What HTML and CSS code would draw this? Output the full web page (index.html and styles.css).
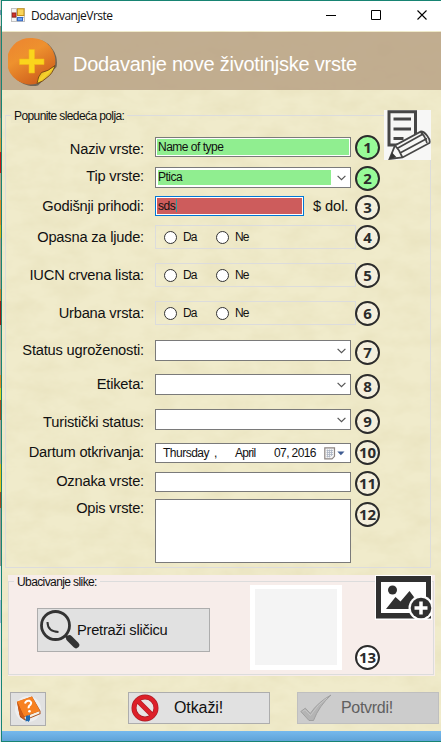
FILE: index.html
```html
<!DOCTYPE html>
<html lang="sr">
<head>
<meta charset="utf-8">
<title>DodavanjeVrste</title>
<link rel="stylesheet" href="styles.css">
</head>
<body>
<div class="window">
  <svg class="paper" width="439" height="710" aria-hidden="true">
    <filter id="grain" x="0" y="0" width="100%" height="100%">
      <feTurbulence type="fractalNoise" baseFrequency="0.035 0.06" numOctaves="4" seed="8"/>
      <feColorMatrix values="0 0 0 0 0.74  0 0 0 0 0.68  0 0 0 0 0.42  0.6 0 0 0 -0.2"/>
    </filter>
    <rect width="439" height="710" filter="url(#grain)"/>
  </svg>
  <header class="titlebar">
    <svg width="14" height="14" viewBox="0 0 14 14">
      <rect x=".5" y=".5" width="13" height="13" fill="#f4f4f4" stroke="#c2c2c2"/>
      <path d="M5.500 1v12M1 9.500h12" stroke="#bbb"/>
      <rect x="6.500" y=".8" width="6.500" height="6.700" fill="#f8d45c" stroke="#c79218"/>
      <rect x="1.300" y="5" width="3.500" height="4" fill="#d3312a" stroke="#97201b"/>
      <rect x="6.500" y="9.500" width="5" height="3.200" fill="#6ba4f4" stroke="#3468c4"/>
    </svg>
    <span class="caption">DodavanjeVrste</span>
    <svg class="controls" width="104" height="12" viewBox="0 0 104 12">
      <path d="M0 6.500h10M45.500 1.500h9v9h-9z" fill="none" stroke="#000"/>
      <path d="M91.500 1.500l9 9m0-9l-9 9" stroke="#000" stroke-width="1.100"/>
    </svg>
  </header>
  <div class="banner">
    <svg width="50" height="50" viewBox="0 0 50 50">
      <defs>
        <linearGradient id="disc" x1="0" y1="0" x2=".6" y2="1"><stop offset="0" stop-color="#ec8330"/><stop offset=".45" stop-color="#ee912e"/><stop offset="1" stop-color="#cf601c"/></linearGradient>
        <linearGradient id="curl" x1="0" y1="0" x2="1" y2="1"><stop offset="0" stop-color="#c98a10"/><stop offset=".5" stop-color="#f7d52d"/><stop offset="1" stop-color="#8c4a12"/></linearGradient>
      </defs>
      <path d="M25 2A23.500 23.500 0 1 0 30 48.500L48.500 30A23.500 23.500 0 0 0 25 2Z" fill="#4b463e" opacity=".7"/>
      <path d="M24.500 1A23.300 23.300 0 1 0 29 46.500L47 28.500A23.300 23.300 0 0 0 24.500 1Z" fill="url(#disc)"/>
      <path d="M29 46.500Q30 39 33.500 35.500 40 34.500 47 28.500 44.500 37 39 40.500 35 44.500 29 46.500Z" fill="url(#curl)" stroke="#6b3b10" stroke-width=".8"/>
      <path d="M21 12.500h5.500v9.500H36v5.500h-9.500V36H21v-8.500h-9.500V22H21z" fill="#fbd51c" stroke="#f3b818" stroke-width=".6"/>
    </svg>
    <h1>Dodavanje nove životinjske vrste</h1>
  </div>

  <section class="group fields">
    <h2>Popunite sledeća polja:</h2>
    <svg class="note" width="47" height="50" viewBox="0 0 47 50">
      <rect width="47" height="50" fill="#f7f7f6"/>
      <path d="M31.500 26V1.800H5V35H17" fill="none" stroke="#464646" stroke-width="3"/>
      <path d="M9.500 9H27M9.500 19H27M9.500 28.500h10" stroke="#464646" stroke-width="3"/>
      <path d="M5.500 49L11 35.500 37 21.500Q40 21.500 43 25.500 46.500 30 45.500 33L18.500 47.500z" fill="#f7f7f6" stroke="#464646" stroke-width="1.800"/>
      <path d="M11 35.500l4 5 3.500 7M13 38.500L39 24M16 43L43 28.500M36.500 22q4 3 6.500 11" fill="none" stroke="#464646" stroke-width="1.700"/>
      <path d="M5.500 49l2.500-6.500 4.500 4.700z" fill="#333"/>
    </svg>
    <div class="form">
      <div class="row r1"><label>Naziv vrste:</label><div class="box text green">Name of type</div><b class="num on">1</b></div>
      <div class="row r2"><label>Tip vrste:</label><div class="box combo"><span class="value">Ptica</span><svg class="chev" viewBox="0 0 9 6"><path d="M.6.8l3.900 3.900L8.400.8"/></svg></div><b class="num on">2</b></div>
      <div class="row r3"><label>Godišnji prihodi:</label><div class="money"><div class="box text red">sds<i></i></div><span>$ dol.</span></div><b class="num">3</b></div>
      <div class="row r4"><label>Opasna za ljude:</label><div class="radios"><i></i><span>Da</span><i></i><span>Ne</span></div><b class="num">4</b></div>
      <div class="row r5"><label>IUCN crvena lista:</label><div class="radios"><i></i><span>Da</span><i></i><span>Ne</span></div><b class="num">5</b></div>
      <div class="row r6"><label>Urbana vrsta:</label><div class="radios"><i></i><span>Da</span><i></i><span>Ne</span></div><b class="num">6</b></div>
      <div class="row r7"><label>Status ugroženosti:</label><div class="box combo"><svg class="chev" viewBox="0 0 9 6"><path d="M.6.8l3.900 3.900L8.400.8"/></svg></div><b class="num">7</b></div>
      <div class="row r8"><label>Etiketa:</label><div class="box combo"><svg class="chev" viewBox="0 0 9 6"><path d="M.6.8l3.900 3.900L8.400.8"/></svg></div><b class="num">8</b></div>
      <div class="row r9"><label>Turistički status:</label><div class="box combo"><svg class="chev" viewBox="0 0 9 6"><path d="M.6.8l3.900 3.900L8.400.8"/></svg></div><b class="num">9</b></div>
      <div class="row r10"><label>Dartum otkrivanja:</label><div class="box date"><span class="day">Thursday</span><span class="comma">,</span><span class="month">April</span><span class="year">07, 2016</span>
        <svg width="21" height="13" viewBox="0 0 21 13"><path d="M.8.8h9.700v8.500l-2.500 2.500H.8z" fill="#f5f5f5" stroke="#8d8583" stroke-width="1.200"/><path d="M2.500 3.500h6.500M2.500 5.500h6.500M2.500 7.500h6.500M2.500 9.500h4M3.500 2.500v8M5.500 2.500v8M7.500 2.500v6.500" stroke="#aab2c2" stroke-width=".8"/><path d="M13.300 4.500h7.200L16.900 8.300z" fill="#3f5c92"/></svg></div><b class="num">10</b></div>
      <div class="row r11"><label>Oznaka vrste:</label><div class="box"></div><b class="num">11</b></div>
      <div class="row r12"><label>Opis vrste:</label><div class="box area"></div><b class="num">12</b></div>
    </div>
  </section>

  <section class="upload">
    <div class="group picture">
      <h2>Ubacivanje slike:</h2>
    </div>
    <div class="uploadrow">
      <div class="button search">
        <svg width="42" height="42" viewBox="0 0 42 42"><circle cx="15.500" cy="16.500" r="14" fill="none" stroke="#333" stroke-width="2.800"/><path d="M7.500 13q0 9.500 11 10" fill="none" stroke="#333" stroke-width="2"/><path d="M25 26l3 3" stroke="#333" stroke-width="3"/><path d="M29.500 29.500l6.500 6.500" stroke="#333" stroke-width="6.500" stroke-linecap="round"/></svg>
        <span>Pretraži sličicu</span>
      </div>
      <div class="frame"></div>
      <b class="num plain">13</b>
    </div>
    <svg class="image" width="57" height="45" viewBox="0 0 57 45">
      <rect width="57" height="45" fill="#fff"/>
      <rect x="1" y="1" width="55" height="42.500" fill="#303030"/>
      <rect x="6" y="7" width="45" height="31" fill="#fff"/>
      <circle cx="17.500" cy="15" r="4.500" fill="#303030"/>
      <path d="M11 34l9.500-12 5 4.500L34.500 16l9 12v6z" fill="#303030"/>
      <circle cx="46" cy="33" r="12.500" fill="#fff"/><circle cx="46" cy="33" r="10.300" fill="#303030"/>
      <path d="M46 26.500v13M39.500 33h13" stroke="#fff" stroke-width="3.500"/>
    </svg>
  </section>

  <div class="actions">
    <div class="button help">
      <svg width="28" height="28" viewBox="0 0 28 28"><circle cx="14" cy="14" r="13" fill="#eeeeef"/><path d="M3 7L18 1.500l8.500 14.500v3L11 25.500 6 22z" fill="#a54a16"/><path d="M10.500 22L25.500 16v2.500L11 24.500z" fill="#f5efe4"/><path d="M3 6.500L18 1.500 26 16 10 21.500z" fill="#f78121"/><path d="M3 6.500l7 15v3L5.500 20z" fill="#cf5c16"/><path d="M11 8.500q1-3.500 4.500-2.700 3 1.700.7 4.200-2 1.200-1.500 3.300" fill="none" stroke="#fff" stroke-width="2"/><circle cx="15.500" cy="16.200" r="1.300" fill="#fff"/><path d="M12 21l4-1v5l-1.500 2-1-1-2 .5z" fill="#1d68ad"/></svg>
    </div>
    <div class="button cancel">
      <svg width="28" height="28" viewBox="0 0 28 28"><circle cx="14" cy="14" r="11" fill="#e8e4e4" stroke="#a91d25" stroke-width="5"/><path d="M6.500 6.500l15 15" stroke="#b71922" stroke-width="5"/><circle cx="14" cy="14" r="11" fill="none" stroke="#dd2029" stroke-width="3.600"/><path d="M6.500 6.500l15 15" stroke="#dd2029" stroke-width="3.600"/></svg>
      <span>Otkaži!</span>
    </div>
    <div class="button confirm">
      <svg width="32" height="28" viewBox="0 0 32 28"><path d="M.8 17.500l4.500-3.300 5 5.300Q18 8 31 1 19 12 13.500 26.500H9z" fill="#b4b4b4" stroke="#9c9c9c" stroke-width=".9"/><path d="M2.500 17.500l2.500-1.700 5.500 5.700Q18 10 27 4" fill="none" stroke="#c6c6c6"/></svg>
      <span>Potvrdi!</span>
    </div>
  </div>
  <footer></footer>
</div>
</body>
</html>
```

FILE: styles.css
```css
* { box-sizing: border-box; }
body {
  margin: 0;
  width: 441px;
  height: 742px;
  overflow: hidden;
  padding-left: 1px;
  font-family: "Liberation Sans", Arial, sans-serif;
  color: #111;
  background: linear-gradient(#d5d2cd 0 10px, #6e93ab 10px 15px, #d5d2cd 15px 26px, #a08a78 26px 118px, #b5a078 118px 138px, #d49a3a 138px 152px, #c41c15 152px 173px, #b8a080 173px 200px, #dd8a28 200px 225px, #d4b11c 225px 238px, #a79a86 238px 289px, #cf8130 289px 301px, #9b1d12 301px 325px, #b4a28e 325px 375px, #dd8a28 375px 388px, #d8cf25 388px 400px, #a84e20 400px 420px, #a9a294 420px 464px, #e0c01c 464px 492px, #a34d24 492px 508px, #9a968f 508px 566px, #e3e3e3 566px 600px, #9db8d2 600px 623px, #e4e4e4 623px);
}
.window {
  position: relative;
  z-index: 0;
  display: flex;
  flex-direction: column;
  width: 440px;
  height: 742px;
  border-left: 1px solid #178473;
  border-top: 1px solid #178473;
  border-bottom: 1px solid #178473;
  background: #f0ebcb;
}
.paper { position: absolute; z-index: -1; left: 0; top: 30px; }
.titlebar {
  display: flex;
  align-items: center;
  height: 30px;
  padding: 0 14px 0 9px;
  background: #fff;
}
.titlebar svg { position: relative; top: -1px; }
.caption { margin-left: 6px; font: 12px/16px "Open Sans", "Noto Sans", sans-serif; letter-spacing: -.5px; color: #111; }
.controls { margin-left: auto; margin-right: -3px; }
.banner {
  display: flex;
  align-items: center;
  height: 58px;
  margin-top: 1px;
  padding: 1px 0 0 6px;
  background: rgba(181, 157, 129, .8);
}
.banner h1 { margin: 4px 0 0 15px; font-weight: 400; font-size: 20px; line-height: 24px; letter-spacing: -.23px; color: #fff; white-space: nowrap; }
.group { border: 1px solid #dcdcdc; }
.group h2 {
  width: max-content;
  margin: -7px 0 0 5px;
  padding: 0 3px;
  font-weight: 400;
  font-size: 12px;
  line-height: 14px;
  letter-spacing: -.6px;
}
.fields { position: relative; height: 453px; width: 426px; margin: 25px 0 0 3px; }
.fields h2 { background: #ede8c8; }
.note { position: absolute; left: 378px; top: -6px; }
.form {
  display: grid;
  grid-template-rows: 31px 29px 30px 38px 38px 39px 34px 35px 31px 31px 28px 68px;
  margin-top: 12px;
}
.row { display: grid; grid-template-columns: 140px 200px 25px; align-items: start; }
.row > label { margin-right: 2px; text-align: right; font-size: 14.67px; line-height: 17px; letter-spacing: -.2px; white-space: nowrap; }
.row > :nth-child(2) { margin-left: 9px; width: 196px; }
.row > .num { margin-left: 9px; }
.r1 label { margin-top: 6px; } .r1 .box { margin-top: 2px; }
.r2 label { margin-top: 2px; } .r2 .box { margin-top: 1px; }
.r3 label { margin-top: 3px; } .r3 .money { margin-top: 1px; }
.r4 label, .r5 label, .r6 label { margin-top: 4px; }
.r7 label, .r8 label { margin-top: 2px; }
.r9 label { margin-top: 5px; }
.r10 label { margin-top: 4px; } .r10 .box { margin-top: 3px; }
.r11 label { margin-top: 2px; } .r11 .box { margin-top: 1px; }
.r12 label { margin-top: 1px; } .r12 .num { margin-top: 3px; }
.box { height: 20px; border: 1px solid #7a7a7a; background: #fff; font-size: 12px; letter-spacing: -.5px; }
.text { padding: 0 2px; line-height: 18px; box-shadow: inset 0 0 0 1px #fff; }
.green { background: #90ee90; }
.combo { display: flex; align-items: center; height: 21px; padding: 2px 4px 2px 2px; }
.combo .value { width: 173px; height: 15px; line-height: 15px; background: #90ee90; }
.chev { width: 9px; height: 6px; margin-left: auto; fill: none; stroke: #555; stroke-width: 1.2; }
.money { display: flex; align-items: center; font-size: 14.67px; }
.money .box { width: 149px; }
.money > span { margin-left: 9px; line-height: 17px; letter-spacing: -.1px; white-space: nowrap; }
.red { border-color: #0078d7; background: #cd5c5c; }
.red i { display: inline-block; width: 1px; height: 13px; margin-left: 1px; vertical-align: -2px; background: #329d9d; }
.row > .radios {
  display: flex;
  align-items: center;
  width: 201px;
  height: 24px;
  border: 1px solid #dcdcdc;
  padding-left: 8px;
  font-size: 12px;
  letter-spacing: -.8px;
}
.radios i { width: 13px; height: 13px; border: 1px solid #333; border-radius: 50%; background: #fff; }
.radios span { width: 33px; margin-left: 6px; }
.num {
  display: flex;
  align-items: center;
  justify-content: center;
  width: 25px;
  height: 25px;
  border: 2px solid #2b2b2b;
  border-radius: 50%;
  background: #f4efdd;
  color: #2b2b2b;
  font: 700 15px/21px "Open Sans", "Noto Sans", sans-serif;
  letter-spacing: -.2px;
}
.on { background: #98fb98; }
.date { display: flex; align-items: center; padding-left: 7px; white-space: nowrap; }
.day { width: 51px; }
.comma { width: 21px; }
.month { width: 39px; letter-spacing: -.7px; }
.year { width: 50px; letter-spacing: -.6px; }
.area { height: 64px; }
.upload {
  position: relative;
  width: 427px;
  height: 101px;
  margin: 7px 0 0 6px;
  padding-top: 6px;
  background: #f7edea;
}
.picture { height: 94px; width: 426px; }
.picture h2 { background: #f7edea; }
.uploadrow { display: flex; height: 85px; margin-top: -90px; padding-left: 29px; }
.button { display: flex; align-items: center; border: 1px solid #adadad; background: #e1e1e1; }
.search { width: 173px; height: 44px; margin-top: 23px; padding-left: 2px; }
.search span { margin-left: -5px; font-size: 14.67px; letter-spacing: -.25px; }
.frame { width: 92px; height: 85px; margin-left: 40px; border: solid #fff; border-width: 4px 5px 5px; background: #f4f4f4; }
.num.plain { margin: 60px 0 0 13px; background: #fff; }
.image { position: absolute; left: 367px; top: 0; }
.actions { display: flex; align-items: flex-start; height: 39px; margin: 16px 0 0 8px; font-size: 16px; }
.help { width: 36px; height: 34px; justify-content: center; }
.cancel { width: 142px; height: 32px; margin-left: 82px; padding-left: 2px; }
.cancel span { margin-left: 15px; letter-spacing: -.1px; }
.confirm { width: 142px; height: 32px; margin-left: 27px; padding-left: 2px; background: #ccc; border-color: #bfbfbf; color: #606060; }
.confirm span { margin-left: 9px; letter-spacing: -.3px; }
footer { height: 10px; margin-top: auto; background: linear-gradient(#76b9ed, #5fa3d8); }
```
